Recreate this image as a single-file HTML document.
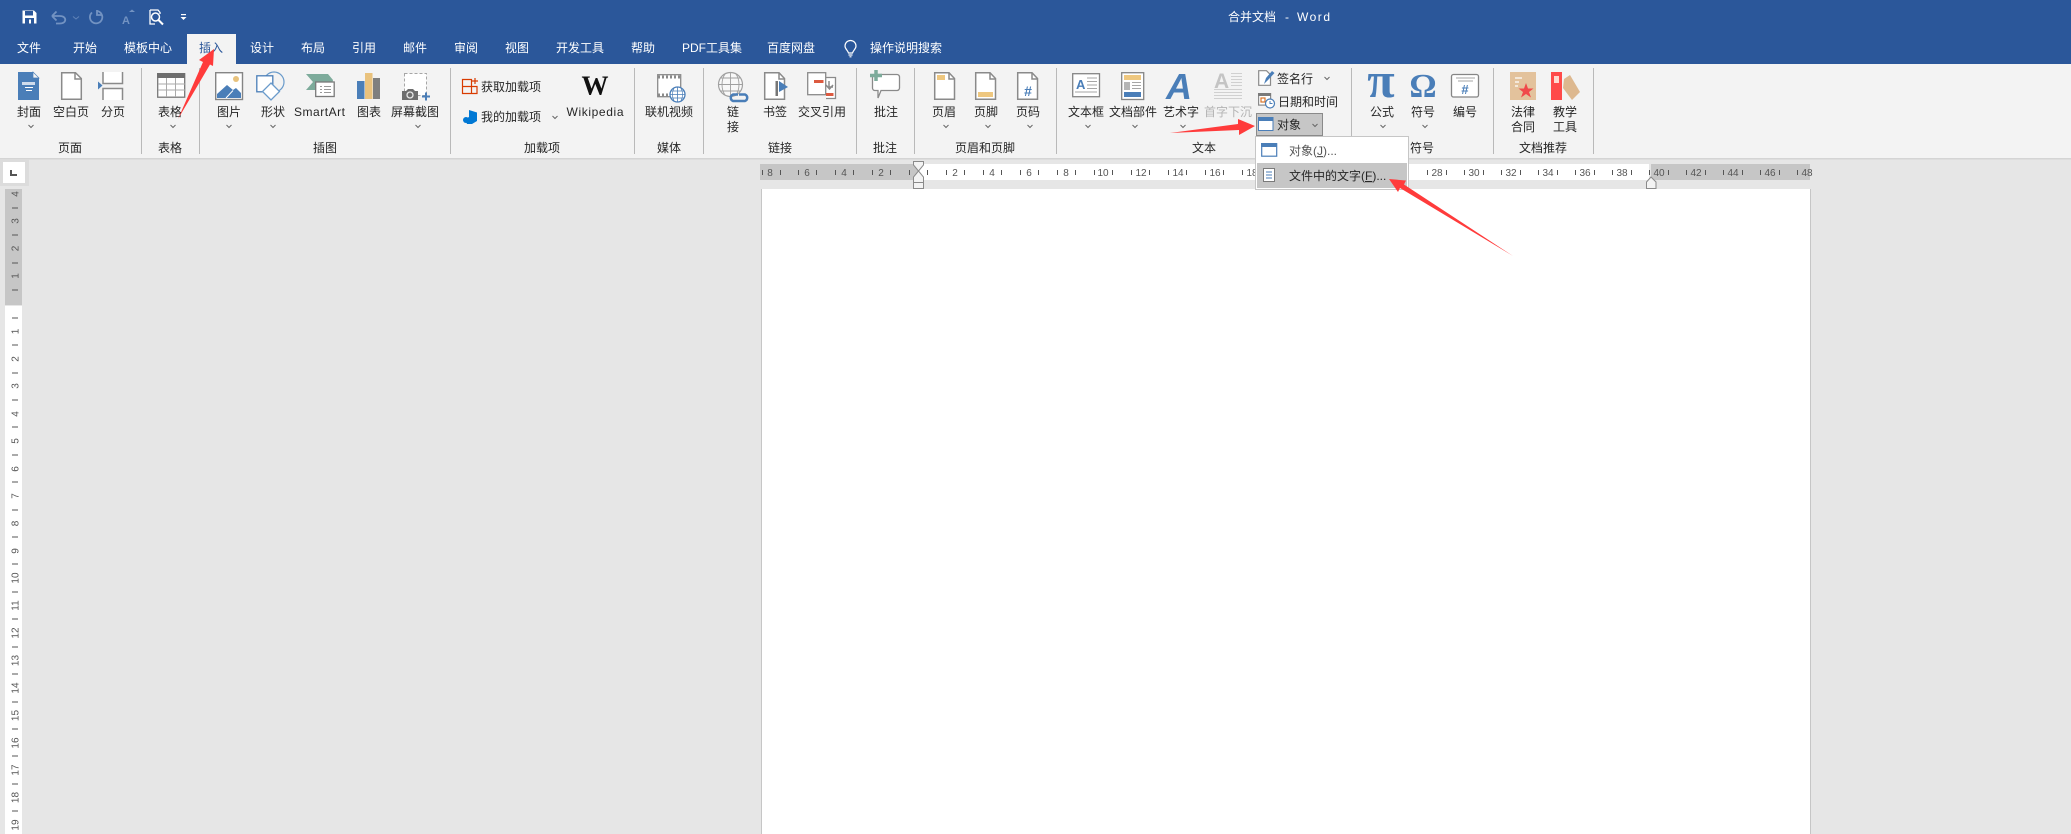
<!DOCTYPE html>
<html lang="zh"><head><meta charset="utf-8"><title>合并文档 - Word</title>
<style>
html,body{margin:0;padding:0;width:2071px;height:834px;overflow:hidden;background:#e6e6e6}
svg{display:block;position:absolute;left:0;top:0}
text{font-family:"Liberation Sans","Noto Sans CJK SC",sans-serif;font-size:12px;fill:#262626}
.t text{fill:#fff}
.m text{text-anchor:middle}
.r text{font-size:10px;fill:#555;text-anchor:middle}
.ic{fill:none;stroke:#8a8a8a;stroke-width:1.5}
.d{fill:#fff;stroke:#8a8a8a;stroke-width:1.5}
.c{fill:none;stroke:#666;stroke-width:1}
</style></head><body>
<svg width="2071" height="834" viewBox="0 0 2071 834" xmlns="http://www.w3.org/2000/svg">
<rect width="2071" height="834" fill="#e6e6e6"/>
<rect width="2071" height="64" fill="#2b579a"/>
<rect y="64" width="2071" height="94" fill="#f3f3f3"/>
<rect y="158" width="2071" height="1.5" fill="#d4d4d4"/>
<rect x="187" y="34" width="49" height="30" fill="#f3f3f3"/>

<!-- QAT -->
<g>
<path d="M22.500 10.500H34L36.500 13V23.500H22.500Z" fill="#fff"/><rect x="25" y="11" width="8" height="4.500" fill="#2b579a"/><rect x="25" y="18" width="9" height="5.500" fill="#2b579a"/><rect x="29" y="19.500" width="2" height="4" fill="#fff"/>
<path d="M52 16H60C67 16 67 23.500 60 23.500H56M52 16L56.500 11.500M52 16L56.500 20.500" fill="none" stroke="#7393c2" stroke-width="1.800"/>
<path d="M73 16.500L76 19L79 16.500" fill="none" stroke="#6083b8" stroke-width="1"/>
<path d="M97 11A6.200 6.200 0 1 1 92 12.500M97 10V15H102" fill="none" stroke="#7393c2" stroke-width="1.800"/>
<text x="122" y="24" style="font-size:11px;fill:#7393c2;font-weight:700">A</text>
<path d="M129 12H135L132 9.500Z" fill="#7393c2"/>
<path d="M150 10H158L160 12.500V14M150 10V24H155" fill="none" stroke="#fff" stroke-width="1.300"/>
<circle cx="155.500" cy="17" r="4" fill="#2b579a" stroke="#fff" stroke-width="1.500"/><path d="M158.500 20L163 24.500" stroke="#fff" stroke-width="2"/>
<rect x="181" y="14" width="5" height="1.200" fill="#fff"/><path d="M180.500 17H186.500L183.500 20Z" fill="#fff"/>
</g>

<!-- title + tabs -->
<g class="t">
<text x="1228" y="21">合并文档</text><text x="1285" y="21">-</text><text x="1297" y="21" textLength="33" lengthAdjust="spacing">Word</text>
<text x="17" y="52">文件</text><text x="73" y="52">开始</text><text x="124" y="52">模板中心</text>
<text x="250" y="52">设计</text><text x="301" y="52">布局</text><text x="352" y="52">引用</text><text x="403" y="52">邮件</text><text x="454" y="52">审阅</text><text x="505" y="52">视图</text><text x="556" y="52">开发工具</text><text x="631" y="52">帮助</text><text x="682" y="52">PDF工具集</text><text x="767" y="52">百度网盘</text><text x="870" y="52">操作说明搜索</text>
</g>
<text x="199" y="52" style="fill:#2b579a">插入</text>
<path d="M848.500 53C847.500 50 845 49 845 46A5.500 5.500 0 0 1 856 46C856 49 853.500 50 852.500 53ZM848.500 55H852.500M849.500 56.800H851.500" fill="none" stroke="#fff" stroke-width="1.200"/>

<!-- separators -->
<g fill="#b9b9b9">
<rect x="141" y="68" width="1" height="86"/><rect x="199" y="68" width="1" height="86"/><rect x="450" y="68" width="1" height="86"/><rect x="634" y="68" width="1" height="86"/><rect x="703" y="68" width="1" height="86"/><rect x="856" y="68" width="1" height="86"/><rect x="914" y="68" width="1" height="86"/><rect x="1056" y="68" width="1" height="86"/><rect x="1351" y="68" width="1" height="86"/><rect x="1493" y="68" width="1" height="86"/><rect x="1593" y="68" width="1" height="86"/>
</g>

<!-- ribbon labels -->
<g class="m">
<text x="29" y="116">封面</text><text x="71" y="116">空白页</text><text x="113" y="116">分页</text>
<text x="170" y="116">表格</text><text x="229" y="116">图片</text><text x="273" y="116">形状</text>
<text x="319.500" y="116" textLength="51" lengthAdjust="spacing">SmartArt</text><text x="369" y="116">图表</text><text x="415" y="116">屏幕截图</text>
<text x="595" y="116" textLength="57" lengthAdjust="spacing">Wikipedia</text><text x="669" y="116">联机视频</text>
<text x="733" y="116">链</text><text x="733" y="131">接</text><text x="775" y="116">书签</text><text x="822" y="116">交叉引用</text><text x="886" y="116">批注</text>
<text x="944" y="116">页眉</text><text x="986" y="116">页脚</text><text x="1028" y="116">页码</text>
<text x="1086" y="116">文本框</text><text x="1133" y="116">文档部件</text><text x="1181" y="116">艺术字</text><text x="1228" y="116" style="fill:#b4b4b4">首字下沉</text>
<text x="1382" y="116">公式</text><text x="1423" y="116">符号</text><text x="1465" y="116">编号</text>
<text x="1523" y="116">法律</text><text x="1523" y="131">合同</text><text x="1565" y="116">教学</text><text x="1565" y="131">工具</text>
<text x="70" y="152">页面</text><text x="170" y="152">表格</text><text x="325" y="152">插图</text><text x="542" y="152">加载项</text><text x="669" y="152">媒体</text><text x="780" y="152">链接</text><text x="885" y="152">批注</text><text x="985" y="152">页眉和页脚</text><text x="1204" y="152">文本</text><text x="1422" y="152">符号</text><text x="1543" y="152">文档推荐</text>
</g>
<text x="481" y="91">获取加载项</text><text x="481" y="121">我的加载项</text>
<text x="1277" y="83">签名行</text><text x="1278" y="106">日期和时间</text>

<!-- chevrons -->
<g class="c">
<path d="M28.500 125L31 127.500L33.500 125M170.500 125L173 127.500L175.500 125M226.500 125L229 127.500L231.500 125M270.500 125L273 127.500L275.500 125M415.500 125L418 127.500L420.500 125M552.500 116L555 118.500L557.500 116M943.500 125L946 127.500L948.500 125M985.500 125L988 127.500L990.500 125M1027.500 125L1030 127.500L1032.500 125M1085.500 125L1088 127.500L1090.500 125M1132.500 125L1135 127.500L1137.500 125M1180.500 125L1183 127.500L1185.500 125M1324.500 77L1327 79.500L1329.500 77M1380.500 125L1383 127.500L1385.500 125M1422.500 125L1425 127.500L1427.500 125"/>
</g>

<!-- page group icons -->
<path d="M18 72H33L39 78V100H18Z" fill="#4a7eb8"/><path d="M33 72L39 78H33Z" fill="#f3f3f3" stroke="#4a7eb8" stroke-width=".7"/>
<rect x="22" y="82" width="13" height="3" fill="#cfdcec"/><rect x="25" y="87" width="8" height="1" fill="#fff"/><rect x="26" y="90" width="6" height="1" fill="#fff"/>
<path class="d" d="M61.700 72.700H75.500L81.300 78.500V99.300H61.700Z"/><path class="ic" d="M75 73V79H81"/>
<path d="M103 72V83.500H122.500V72M103 100V88.500H122.500V100" class="ic" style="fill:#fff"/><path d="M98 81.500L102.500 85.500L98 89.500Z" fill="#4a7eb8"/>
<!-- table -->
<rect x="157.700" y="73.700" width="27" height="23.500" fill="#fff" stroke="#787878" stroke-width="1.300"/><rect x="157" y="73" width="28" height="5" fill="#6e6e6e"/>
<path d="M158 84H185M158 90H185M166.500 78V97M175.500 78V97" stroke="#aaa" stroke-width="1"/>
<!-- picture -->
<rect x="215.700" y="72.700" width="26.800" height="26.800" fill="#fff" stroke="#858585" stroke-width="1.400"/><circle cx="236" cy="79" r="3" fill="#e8c27c"/>
<path d="M217 98V94L227 85L233 90L236 88L241 93V98Z" fill="#4a7eb8"/><path d="M226 98L233 90.500" stroke="#fff" stroke-width="1" fill="none"/>
<!-- shapes -->
<circle cx="274" cy="82" r="10" fill="none" stroke="#6a9bcb" stroke-width="1.200"/>
<rect x="256.800" y="75.800" width="16" height="16" fill="#fff" stroke="#4a7eb8" stroke-width="1.300"/>
<path d="M271 83L279.500 91.500L271 100L262.500 91.500Z" fill="#fff" stroke="#6a9bcb" stroke-width="1.300"/>
<!-- smartart -->
<path d="M306 74H328L333 80L331 90H306L313 82Z" fill="#7dab9b"/>
<rect x="315.700" y="82" width="18.500" height="14.500" fill="#fff" stroke="#7a7a7a" stroke-width="1.300"/><path d="M320 86.500H322M324 86.500H331M320 89.500H322M324 89.500H331M320 92.500H322M324 92.500H331" stroke="#999" fill="none"/>
<!-- chart -->
<rect x="357" y="81" width="7.500" height="18" fill="#4a7eb8"/><rect x="365" y="73" width="7.500" height="26" fill="#e9c27d"/><rect x="373" y="78" width="7" height="21" fill="#7f7f7f"/>
<!-- screenshot -->
<rect x="404.500" y="73.500" width="22" height="22" fill="#fff" stroke="#a6a6a6" stroke-dasharray="3 2"/>
<path d="M402 91H406L408 89H413L415 91H418V100H402Z" fill="#6e6e6e"/><circle cx="410" cy="95" r="3" fill="#6e6e6e" stroke="#e8e8e8" stroke-width="1.300"/>
<path d="M422 96.500H430M426 92.500V100.500" stroke="#4a7eb8" stroke-width="2" fill="none"/>
<!-- addins -->
<path d="M462.500 79.500H471.500V93.500H462.500ZM462.500 86.500H477V93.500H471.500" fill="none" stroke="#d83b01" stroke-width="1.200"/><path d="M475 78V84M472 81H478" stroke="#d83b01" stroke-width="1.200"/>
<path d="M469 110L477 112.500V121L472 124H467L465 119L469 117Z" fill="#0078d4"/><circle cx="466" cy="120" r="3" fill="#0078d4"/>
<text x="595" y="94.500" style="font-family:'Liberation Serif',serif;font-size:27px;font-weight:700;fill:#111;text-anchor:middle">W</text>
<!-- video -->
<rect x="657.700" y="74.700" width="23" height="22" fill="#fff" stroke="#8a8a8a" stroke-width="1.300"/>
<path d="M658 77H681M658 95H681" stroke="#8a8a8a" stroke-width="3" stroke-dasharray="2 2"/>
<circle cx="677.500" cy="94.500" r="7.500" fill="#fff" stroke="#4a7eb8" stroke-width="1.300"/><path d="M670 94.500H685M671 91H684M671 98H684M677.500 87V102M674 88C672 92 672 97 674 101M681 88C683 92 683 97 681 101" stroke="#4a7eb8" fill="none" stroke-width=".8"/>
<!-- link -->
<circle cx="730.500" cy="84.500" r="12" fill="#f8f8f8" stroke="#a0a0a0" stroke-width="1.200"/><path d="M719 84.500H742M720 78H741M720 91H741M730.500 73V96M725 74C721 80 721 89 725 95M736 74C740 80 740 89 736 95" fill="none" stroke="#a0a0a0" stroke-width=".9"/>
<path d="M738 94.500H733A3.500 3.500 0 0 0 733 101H739M739 94.500H745A3.500 3.500 0 0 1 745 101H739" fill="none" stroke="#4a7eb8" stroke-width="2.500"/>
<!-- bookmark -->
<path class="d" d="M764.700 72.700H779L784.500 78.500V99.300H764.700Z"/><path class="ic" d="M779 73V79H784"/><rect x="775.500" y="81" width="2.500" height="15" fill="#767676"/><path d="M779 81L788 87L779 92Z" fill="#4a7eb8"/>
<!-- crossref -->
<path d="M826 77.500H835.500V98.500H826" fill="#fff" stroke="#8a8a8a" stroke-width="1.300"/>
<rect x="807.700" y="72.700" width="18" height="22" fill="#fff" stroke="#8a8a8a" stroke-width="1.300"/><rect x="814" y="80" width="9.500" height="3" fill="#dc5a40"/><rect x="826" y="93" width="7.500" height="3" fill="#dc5a40"/>
<path d="M829 81V87H833M826 85L829.500 89L833 85" fill="none" stroke="#8a8a8a" stroke-width="1.500"/>
<!-- comment -->
<path d="M875 74.500H897A2.500 2.500 0 0 1 899.500 77V88A2.500 2.500 0 0 1 897 90.500H881L878 98V90.500H875A2.500 2.500 0 0 1 872.500 88V77A2.500 2.500 0 0 1 875 74.500Z" fill="#fff" stroke="#8a8a8a" stroke-width="1.300"/>
<path d="M876 70V81M870 75.500H882" stroke="#7dab9b" stroke-width="3.500"/>
<!-- header footer num -->
<path class="d" d="M934.700 72.700H949L954.500 78.500V99.300H934.700Z"/><path class="ic" d="M949 73V79H954"/><rect x="937" y="75" width="8" height="5" fill="#eec77f"/>
<path class="d" d="M975.700 72.700H990L995.500 78.500V99.300H975.700Z"/><path class="ic" d="M990 73V79H995"/><rect x="978" y="92" width="15" height="5" fill="#eec77f"/>
<path class="d" d="M1017.700 72.700H1032L1037.500 78.500V99.300H1017.700Z"/><path class="ic" d="M1032 73V79H1037"/><text x="1028" y="96" style="font-size:14px;font-weight:700;fill:#4a7eb8;text-anchor:middle">#</text>
<!-- textbox -->
<rect x="1072.700" y="73.700" width="26.800" height="23" fill="#fff" stroke="#858585" stroke-width="1.300"/><text x="1076" y="89" style="font-size:13px;font-weight:700;fill:#4a7eb8">A</text>
<path d="M1087 78H1097M1087 81.500H1097M1087 85H1097M1087 88.500H1097M1075 92H1097" stroke="#a6a6a6" fill="none"/>
<!-- parts -->
<rect x="1121.700" y="72.700" width="22" height="26.800" fill="#fff" stroke="#858585" stroke-width="1.300"/><rect x="1124" y="75" width="17" height="5" fill="#eec77f"/><rect x="1124" y="82" width="6" height="8" fill="#b5b5b5"/>
<path d="M1132 82.500H1141M1132 85.500H1141M1132 88.500H1141" stroke="#a6a6a6"/><rect x="1124" y="92" width="17" height="5" fill="#4a7eb8"/>
<!-- wordart -->
<text x="1179" y="99" style="font-family:'Liberation Sans',sans-serif;font-size:36px;font-weight:700;font-style:italic;fill:#4a7eb8;text-anchor:middle">A</text>
<!-- dropcap -->
<text x="1214" y="88" style="font-size:21px;font-weight:700;fill:#c4c4c4">A</text>
<path d="M1231 73.500H1242M1231 76.500H1242M1231 79.500H1242M1231 82.500H1242M1231 85.500H1242M1214 89.500H1242M1214 92.500H1242M1214 95.500H1242M1214 98.500H1242" stroke="#d0d0d0"/>
<!-- signature -->
<path d="M1258.700 70.700H1266.500L1270.500 74.700V85.300H1258.700Z" fill="#fff" stroke="#8a8a8a" stroke-width="1.200"/>
<path d="M1264 84L1266 78L1272 71L1274.500 73L1268 80Z" fill="#4a7eb8"/>
<!-- date -->
<rect x="1258.600" y="93.600" width="12" height="11.500" fill="#fff" stroke="#8a8a8a" stroke-width="1.200"/><rect x="1258" y="93" width="13" height="3" fill="#7a7a7a"/><rect x="1261" y="98" width="4" height="4" fill="none" stroke="#d8742a" stroke-width="1.200"/>
<circle cx="1270" cy="103.500" r="4.500" fill="#fff" stroke="#4a7eb8" stroke-width="1.200"/><path d="M1270 101V103.500H1272.500" fill="none" stroke="#4a7eb8"/>
<!-- object button -->
<rect x="1256.500" y="113.500" width="66" height="22" fill="#c6c6c6" stroke="#8a8a8a"/>
<rect x="1258.500" y="117.500" width="14.500" height="13" fill="#fff" stroke="#4a7eb8"/><rect x="1258" y="117" width="15.500" height="4" fill="#4a7eb8"/>
<text x="1277" y="129">对象</text><path class="c" d="M1312.500 124L1315 126.500L1317.500 124"/>
<!-- math -->
<text x="1381" y="97" style="font-family:'Liberation Serif',serif;font-size:50px;font-weight:700;fill:#4a7eb8;text-anchor:middle">π</text>
<text x="1423" y="97" style="font-family:'Liberation Serif',serif;font-size:34px;font-weight:700;fill:#4a7eb8;text-anchor:middle">Ω</text>
<rect x="1451.500" y="74.500" width="27" height="22.500" rx="2" fill="#fff" stroke="#858585" stroke-width="1.300"/><path d="M1456 78H1475M1458 81H1473" stroke="#a6a6a6"/><text x="1465" y="94" style="font-size:13px;font-weight:700;fill:#4a7eb8;text-anchor:middle">#</text>
<!-- recommend -->
<rect x="1510" y="72" width="26" height="28" fill="#e3c29c"/><path d="M1515 78H1522M1515 82H1519M1515 86H1518" stroke="#fff" stroke-width="1.300"/>
<path d="M1526 83L1528 88.500H1533.500L1529 92L1531 97.500L1526 94L1521 97.500L1523 92L1518.500 88.500H1524Z" fill="#f0494a"/>
<rect x="1551" y="72" width="11" height="28" fill="#ff4a4a"/><rect x="1554" y="76" width="5" height="7" fill="#ffd9d0"/>
<path d="M1564 79L1570 75L1580 92L1572 100L1563 88Z" fill="#ddb88f"/>

<!-- horizontal ruler -->
<rect x="760" y="164" width="158" height="16" fill="#c6c6c6"/><rect x="918" y="164" width="731" height="16" fill="#fff"/><rect x="1651" y="164" width="159" height="16" fill="#c6c6c6"/>
<path d="M762.500 170V175M780.500 170V175M798.500 170V175M816.500 170V175M835.500 170V175M853.500 170V175M872.500 170V175M890.500 170V175M909.500 170V175M927.500 170V175M946.500 170V175M964.500 170V175M983.500 170V175M1001.500 170V175M1020.500 170V175M1038.500 170V175M1057.500 170V175M1075.500 170V175M1094.500 170V175M1112.500 170V175M1131.500 170V175M1149.500 170V175M1168.500 170V175M1186.500 170V175M1205.500 170V175M1223.500 170V175M1242.500 170V175M1260.500 170V175M1427.500 170V175M1446.500 170V175M1464.500 170V175M1483.500 170V175M1501.500 170V175M1520.500 170V175M1538.500 170V175M1557.500 170V175M1575.500 170V175M1594.500 170V175M1612.500 170V175M1631.500 170V175M1649.500 170V175M1668.500 170V175M1686.500 170V175M1705.500 170V175M1723.500 170V175M1742.500 170V175M1760.500 170V175M1779.500 170V175M1797.500 170V175" stroke="#555" fill="none"/>
<g class="r">
<text x="770" y="176">8</text><text x="807" y="176">6</text><text x="844" y="176">4</text><text x="881" y="176">2</text>
<text x="955" y="176">2</text><text x="992" y="176">4</text><text x="1029" y="176">6</text><text x="1066" y="176">8</text><text x="1103" y="176">10</text><text x="1141" y="176">12</text><text x="1178" y="176">14</text><text x="1215" y="176">16</text><text x="1252" y="176">18</text>
<text x="1437" y="176">28</text><text x="1474" y="176">30</text><text x="1511" y="176">32</text><text x="1548" y="176">34</text><text x="1585" y="176">36</text><text x="1622" y="176">38</text><text x="1659" y="176">40</text><text x="1696" y="176">42</text><text x="1733" y="176">44</text><text x="1770" y="176">46</text><text x="1807" y="176">48</text>
</g>
<!-- indent markers -->
<path d="M913.500 161.500H923.500V165L918.500 171L923.500 177V188.500H913.500V177L918.500 171L913.500 165Z" fill="#f3f3f3" stroke="#8a8a8a"/><path d="M913.500 182.500H923.500" stroke="#8a8a8a"/>
<path d="M1646.500 188.500V182L1651 177L1656 182V188.500Z" fill="#f3f3f3" stroke="#8a8a8a"/>

<!-- page -->
<rect x="762" y="189" width="1048" height="645" fill="#fff"/>
<rect x="761" y="189" width="1" height="645" fill="#c6c6c6"/><rect x="1810" y="189" width="1" height="645" fill="#c6c6c6"/>

<!-- dropdown -->
<rect x="1255.500" y="136.500" width="153" height="53" fill="#fff" stroke="#c6c6c6"/>
<rect x="1257" y="163" width="150" height="25" fill="#c6c6c6"/>
<rect x="1261.700" y="143.700" width="15" height="12.500" fill="#fff" stroke="#4a7eb8" stroke-width="1.200"/><rect x="1261" y="143" width="16" height="4" fill="#4a7eb8"/>
<path d="M1263.500 168.500H1274.500V181.500H1263.500Z" fill="#fff" stroke="#7a7a7a"/><path d="M1266 172H1272M1266 175H1272M1266 178H1272" stroke="#4a7eb8"/>
<text x="1289" y="155" style="fill:#555">对象(<tspan text-decoration="underline">J</tspan>)...</text>
<text x="1289" y="180">文件中的文字(<tspan text-decoration="underline">F</tspan>)...</text>

<!-- vertical ruler -->
<rect x="5" y="189" width="17" height="116" fill="#c6c6c6"/><rect x="5" y="306" width="17" height="528" fill="#fff"/>
<path d="M12 208H18M12 235H18M12 263H18M12 290H18M12 318H18M12 345H18M12 373H18M12 400H18M12 427H18M12 455H18M12 482H18M12 510H18M12 537H18M12 564H18M12 592H18M12 619H18M12 647H18M12 674H18M12 702H18M12 729H18M12 756H18M12 784H18M12 811H18" stroke="#555" fill="none"/>
<g class="r">
<text transform="translate(18.500,194) rotate(-90)">4</text><text transform="translate(18.500,221) rotate(-90)">3</text><text transform="translate(18.500,248.500) rotate(-90)">2</text><text transform="translate(18.500,276) rotate(-90)">1</text>
<text transform="translate(18.500,331.500) rotate(-90)">1</text><text transform="translate(18.500,359) rotate(-90)">2</text><text transform="translate(18.500,386) rotate(-90)">3</text><text transform="translate(18.500,414) rotate(-90)">4</text><text transform="translate(18.500,441) rotate(-90)">5</text><text transform="translate(18.500,469) rotate(-90)">6</text><text transform="translate(18.500,496) rotate(-90)">7</text><text transform="translate(18.500,523.500) rotate(-90)">8</text><text transform="translate(18.500,551) rotate(-90)">9</text><text transform="translate(18.500,578) rotate(-90)">10</text><text transform="translate(18.500,605.500) rotate(-90)">11</text><text transform="translate(18.500,633) rotate(-90)">12</text><text transform="translate(18.500,660.500) rotate(-90)">13</text><text transform="translate(18.500,688) rotate(-90)">14</text><text transform="translate(18.500,715.500) rotate(-90)">15</text><text transform="translate(18.500,743) rotate(-90)">16</text><text transform="translate(18.500,770) rotate(-90)">17</text><text transform="translate(18.500,797.500) rotate(-90)">18</text><text transform="translate(18.500,825) rotate(-90)">19</text>
</g>
<!-- tab stop box -->
<rect x="0" y="159" width="29" height="27" fill="#dcdcdc"/><rect x="3" y="162" width="22" height="21" fill="#fff"/>
<path d="M11 170V175H17" fill="none" stroke="#555" stroke-width="2"/>

<!-- red arrows -->
<path d="M178 119L203 62L199 60L214 49L213 66L210 64.500Z" fill="#ff3b3b"/>
<path d="M1170 133L1238 124L1238 119L1255 126L1239 135L1239 130Z" fill="#ff3b3b"/>
<path d="M1389 179L1406 180.500L1404 184.500L1513 256L1400 188L1398 192Z" fill="#ff3b3b"/>
</svg>
</body></html>
